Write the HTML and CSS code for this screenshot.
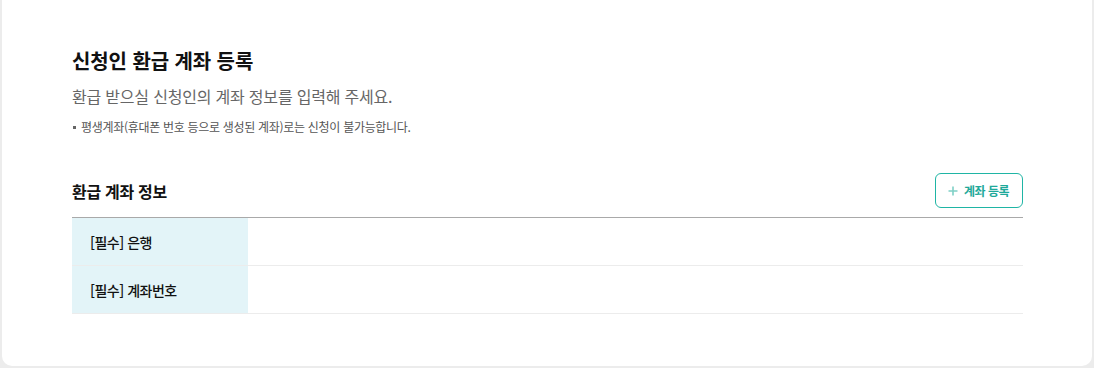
FILE: index.html
```html
<!DOCTYPE html>
<html lang="ko">
<head>
    <meta charset="UTF-8">
    <title>신청인 환급 계좌 등록</title>
    <link rel="stylesheet" href="styles.css">
</head>
<body>
    <div class="page">
        <div class="card">
            <h1 class="title">신청인 환급 계좌 등록</h1>
            <p class="subtitle">환급 받으실 신청인의 계좌 정보를 입력해 주세요.</p>
            <ul class="notice">
                <li>평생계좌(휴대폰 번호 등으로 생성된 계좌)로는 신청이 불가능합니다.</li>
            </ul>

            <div class="section-head">
                <h2 class="section-title">환급 계좌 정보</h2>
                <button class="btn-add" type="button">
                    <svg class="btn-add-icon" width="10" height="10" viewBox="0 0 10 10">
                        <path d="M5 0.5V9.5M0.5 5H9.5" stroke="#7fd0c6" stroke-width="1.6"/>
                    </svg>
                    계좌 등록
                </button>
            </div>

            <table class="info-table">
                <tr>
                    <th>[필수] 은행</th>
                    <td></td>
                </tr>
                <tr>
                    <th>[필수] 계좌번호</th>
                    <td></td>
                </tr>
            </table>
        </div>
    </div>
</body>
</html>
```

FILE: styles.css
```css
body {
    margin: 0;
    background: #ececec;
    font-family: "Noto Sans CJK KR", "Noto Sans", sans-serif;
    color: #111;
}

.page {
    padding: 0 2px 2px 2px;
}

.card {
    background: #fff;
    height: 366px;
    box-sizing: border-box;
    border-radius: 0 0 10px 10px;
    padding: 46px 69px 0 70px;
}

.title {
    margin: 0;
    font-size: 20px;
    font-weight: 700;
    letter-spacing: -0.1px;
    line-height: 30px;
}

.subtitle {
    margin: 8px 0 0 0;
    font-size: 16px;
    color: #666;
    letter-spacing: -0.2px;
    line-height: 24px;
}

.notice {
    list-style: none;
    margin: 10px 0 0 0;
    padding: 0;
    font-size: 12px;
    color: #555;
    letter-spacing: -0.3px;
    line-height: 18px;
}

.notice li::before {
    content: "";
    display: inline-block;
    width: 3px;
    height: 3px;
    background: #666;
    margin: 0 5px 2px 1px;
    vertical-align: middle;
}

.section-head {
    display: flex;
    justify-content: space-between;
    align-items: center;
    margin-top: 37px;
    padding-bottom: 9px;
}

.section-title {
    margin: 0;
    font-size: 16px;
    font-weight: 700;
    letter-spacing: -0.3px;
}

.btn-add {
    display: flex;
    align-items: center;
    gap: 6px;
    height: 35px;
    padding: 0 13px 0 12px;
    background: #fff;
    border: 1px solid #1fb5a5;
    border-radius: 6px;
    color: #1fa99a;
    font-family: inherit;
    font-size: 12px;
    font-weight: 700;
    letter-spacing: -0.5px;
}

.info-table {
    width: 100%;
    border-collapse: collapse;
    border-top: 1px solid #a9a9a9;
}

.info-table th,
.info-table td {
    height: 47px;
    padding: 0;
    border-bottom: 1px solid #ececec;
}

.info-table th {
    width: 158px;
    background: #e3f4f8;
    text-align: left;
    padding-left: 18px;
    font-size: 14px;
    font-weight: 500;
    letter-spacing: -0.5px;
}
```
